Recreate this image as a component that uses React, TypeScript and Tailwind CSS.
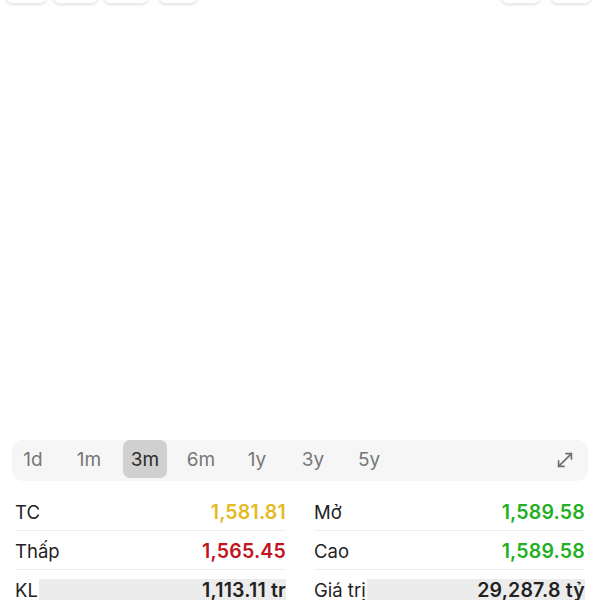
import React from "react";
import { MoveDiagonal } from "lucide-react";

const ranges = ["1d", "1m", "3m", "6m", "1y", "3y", "5y"];

function Row({
  label,
  value,
  color,
  bar,
  border = true,
}: {
  label: string;
  value: string;
  color: string;
  bar?: boolean;
  border?: boolean;
}) {
  return (
    <div
      className={`flex items-center h-[39px] pt-[3px] ${border ? "border-b border-[#efefef]" : ""}`}
    >
      <span className="text-[18.5px] text-[#222] shrink-0">{label}</span>
      {bar ? (
        <div className="flex-1 ml-[1px] h-[24px] bg-[#ececec] flex items-center justify-end">
          <span className={`text-[19.5px] font-semibold tracking-[0.2px] ${color}`}>{value}</span>
        </div>
      ) : (
        <span className={`ml-auto text-[19.5px] font-semibold tracking-[0.2px] ${color}`}>{value}</span>
      )}
    </div>
  );
}

export default function App() {
  return (
    <div
      className="w-[600px] h-[600px] overflow-hidden bg-white flex flex-col"
      style={{ fontFamily: "Inter, 'Noto Sans', sans-serif" }}
    >
      <div className="flex h-[30px] -mt-[26px] shrink-0 px-[5px]">
        <div className="w-[42px] h-full rounded-[8px] border border-[#ededed] shadow-sm" />
        <div className="w-[47px] h-full rounded-[8px] border border-[#ededed] shadow-sm ml-[5px]" />
        <div className="w-[46px] h-full rounded-[8px] border border-[#ededed] shadow-sm ml-[4px]" />
        <div className="w-[40px] h-full rounded-[8px] border border-[#ededed] shadow-sm ml-[9px]" />
        <div className="flex-1" />
        <div className="w-[41px] h-full rounded-[8px] border border-[#ededed] shadow-sm" />
        <div className="w-[42px] h-full rounded-[8px] border border-[#ededed] shadow-sm ml-[9px] mr-[3px]" />
      </div>
      <div className="h-[436px] shrink-0" />
      <div className="mx-[12px] h-[41px] rounded-[10px] bg-[#f6f6f6] flex items-start shrink-0">
        <div className="flex gap-[12px] -ml-px">
          {ranges.map((r) => (
            <div
              key={r}
              className={`w-[44px] h-[38px] pt-[3px] rounded-[7px] flex items-center justify-center text-[19px] ${
                r === "3m" ? "bg-[#d0d0d0] text-[#2a2a2a]" : "text-[#777]"
              }`}
            >
              {r}
            </div>
          ))}
        </div>
        <div className="ml-auto mr-[12px] h-[40px] flex items-center">
          <MoveDiagonal size={22} strokeWidth={1.8} className="text-[#6f6f6f]" />
        </div>
      </div>
      <div className="grid grid-cols-2 gap-x-[28px] px-[15px] mt-[11px]">
        <div className="flex flex-col">
          <Row label="TC" value="1,581.81" color="text-[#e6b91e]" />
          <Row label="Thấp" value="1,565.45" color="text-[#c0141e]" />
          <Row label="KL" value="1,113.11 tr" color="text-[#222]" bar border={false} />
        </div>
        <div className="flex flex-col">
          <Row label="Mở" value="1,589.58" color="text-[#22b022]" />
          <Row label="Cao" value="1,589.58" color="text-[#22b022]" />
          <Row label="Giá trị" value="29,287.8 tỷ" color="text-[#222]" bar border={false} />
        </div>
      </div>
    </div>
  );
}
